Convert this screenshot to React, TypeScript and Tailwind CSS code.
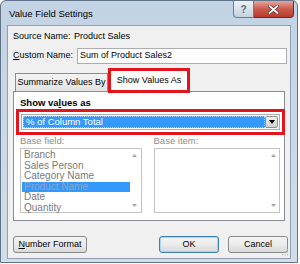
const font = { fontFamily: '"Liberation Sans", Arial, sans-serif' };

const baseFields = ["Branch", "Sales Person", "Category Name", "Product Name", "Date", "Quantity"];

function ScrollArrows() {
  return (
    <div className="w-[10px] flex flex-col justify-between items-center py-[4px]">
      <svg width="5" height="3" viewBox="0 0 5 3">
        <path d="M0 3 L2.5 0 L5 3 Z" fill="#a6a6a6" />
      </svg>
      <svg width="5" height="3" viewBox="0 0 5 3">
        <path d="M0 0 L2.5 3 L5 0 Z" fill="#a6a6a6" />
      </svg>
    </div>
  );
}

function Button({ children, primary = false }: { children: React.ReactNode; primary?: boolean }) {
  return (
    <div
      className={
        "h-[17px] rounded-[3px] border flex items-center justify-center text-[9px] text-black bg-gradient-to-b from-[#f4f4f4] via-[#ebebeb] to-[#d9d9d9] " +
        (primary ? "border-[#3c7fb1] shadow-[inset_0_0_0_1px_#9fd8f5]" : "border-[#8a8a8a]")
      }
    >
      {children}
    </div>
  );
}

export default function App() {
  return (
    <div className="w-[300px] h-[264px] bg-white" style={font}>
      <div className="w-[298px] h-[263px] rounded-t-[6px] border border-[#5f7389] bg-gradient-to-b from-[#c3d3e4] to-[#d3dde8] flex flex-col">
        <div className="h-[24px] flex items-start justify-between pl-[8px] pr-[3px] shrink-0">
          <span className="mt-[7px] text-[9.5px] leading-[12px] text-black">Value Field Settings</span>
          <div className="flex">
            <div className="w-[21px] h-[17px] rounded-bl-[4px] border border-t-0 border-[#6b7d92] bg-gradient-to-b from-[#eef2f7] to-[#c5d2e0] flex items-center justify-center text-[10px] font-bold text-[#5d6d80]">
              ?
            </div>
            <div className="w-[40px] h-[17px] rounded-br-[4px] border border-l-0 border-t-0 border-[#6e2a25] bg-gradient-to-b from-[#e6a69e] via-[#c95a4d] to-[#b93a2c] flex items-center justify-center">
              <svg width="11" height="9" viewBox="0 0 11 9">
                <path d="M1.5 1 L9.5 8 M9.5 1 L1.5 8" stroke="#5a2a25" strokeWidth="3.2" strokeLinecap="round" />
                <path d="M1.5 1 L9.5 8 M9.5 1 L1.5 8" stroke="#ffffff" strokeWidth="1.8" strokeLinecap="round" />
              </svg>
            </div>
          </div>
        </div>

        <div className="relative mx-[6px] mb-[3px] flex-1 border border-[#8fa0b4] bg-[#f0f0f0] flex flex-col text-[9px] text-black">
          <div className="flex items-center mt-[4px] pl-[5px] h-[12px] leading-[12px]">
            <span className="w-[61px]">Source Name:</span>
            <span>Product Sales</span>
          </div>

          <div className="flex items-center mt-[6px] pl-[5px]">
            <span className="w-[64px]">
              <span className="underline">C</span>ustom Name:
            </span>
            <div className="w-[210px] h-[16px] border border-[#abadb3] bg-white flex items-center pl-[2px]">
              Sum of Product Sales2
            </div>
          </div>

          <div className="flex items-end mt-[6px] pl-[7px] h-[21px]">
            <div className="w-[93px] h-[18px] border border-b-0 border-[#898c95] bg-gradient-to-b from-[#f4f4f4] to-[#e2e2e2] flex items-center justify-center">
              Summarize Values By
            </div>
            <div className="ml-[2px] w-[78px] h-[21px] border border-b-0 border-[#898c95] bg-white flex items-center justify-center outline-[3px] outline-solid outline-[#e3141c] outline-offset-[-1px] relative z-10">
              Show Values As
            </div>
          </div>

          <div className="mx-[5px] border border-[#898c95] bg-white pl-[6px] pr-[4px] pt-[5px] pb-[7px] flex flex-col">
            <div className="font-bold text-[9.5px] h-[12px] leading-[12px]">
              Show va<span className="underline">l</span>ues as
            </div>
            <div className="ml-[1px] mt-[5px] h-[16px] border border-[#abadb3] bg-white flex items-stretch p-[1px] outline-[3px] outline-solid outline-[#e3141c] outline-offset-[2px]">
              <div className="flex-1 bg-[#3399ff] text-white text-[9.5px] flex items-center pl-[2px] border border-dotted border-[#a8d0ff]">
                % of Column Total
              </div>
              <div className="w-[13px] border border-[#8e8f8f] rounded-[2px] bg-gradient-to-b from-[#f2f2f2] to-[#cfcfcf] flex items-center justify-center">
                <svg width="6" height="4" viewBox="0 0 6 4">
                  <path d="M0 0 L6 0 L3 4 Z" fill="#000" />
                </svg>
              </div>
            </div>
            <div className="flex mt-[5px] text-[#8d8d8d] text-[9.5px]">
              <div className="w-[122px] flex flex-col">
                <div className="h-[12px] leading-[12px]">Base field:</div>
                <div className="mt-[1px] h-[65px] border border-[#c3c3c3] bg-white flex p-[1px]">
                  <div className="flex-1 flex flex-col">
                    {baseFields.map((f) => (
                      <div
                        key={f}
                        className={
                          "h-[10.5px] leading-[10.5px] pl-[2px] text-[10px] " +
                          (f === "Product Name" ? "bg-[#3399ff] text-[#8aa4c4]" : "text-[#7a7a7a]")
                        }
                      >
                        {f}
                      </div>
                    ))}
                  </div>
                  <ScrollArrows />
                </div>
              </div>
              <div className="ml-[12px] w-[127px] flex flex-col">
                <div className="h-[12px] leading-[12px]">Base item:</div>
                <div className="mt-[1px] h-[65px] border border-[#c3c3c3] bg-white flex p-[1px]">
                  <div className="flex-1" />
                  <ScrollArrows />
                </div>
              </div>
            </div>
          </div>

          <div className="flex mt-[15px] pl-[5px] pr-[2px]">
            <div className="w-[74px]">
              <Button>
                <span className="underline">N</span>umber Format
              </Button>
            </div>
            <div className="ml-auto w-[60px]">
              <Button primary>OK</Button>
            </div>
            <div className="ml-[9px] w-[60px]">
              <Button>Cancel</Button>
            </div>
          </div>

          <svg className="absolute right-[1px] bottom-[1px]" width="9" height="9" viewBox="0 0 9 9">
            <g fill="#b0b8c2">
              <rect x="7" y="1" width="1.2" height="1.2" />
              <rect x="4.5" y="3.5" width="1.2" height="1.2" />
              <rect x="7" y="3.5" width="1.2" height="1.2" />
              <rect x="2" y="6" width="1.2" height="1.2" />
              <rect x="4.5" y="6" width="1.2" height="1.2" />
              <rect x="7" y="6" width="1.2" height="1.2" />
            </g>
          </svg>
        </div>
      </div>
    </div>
  );
}
